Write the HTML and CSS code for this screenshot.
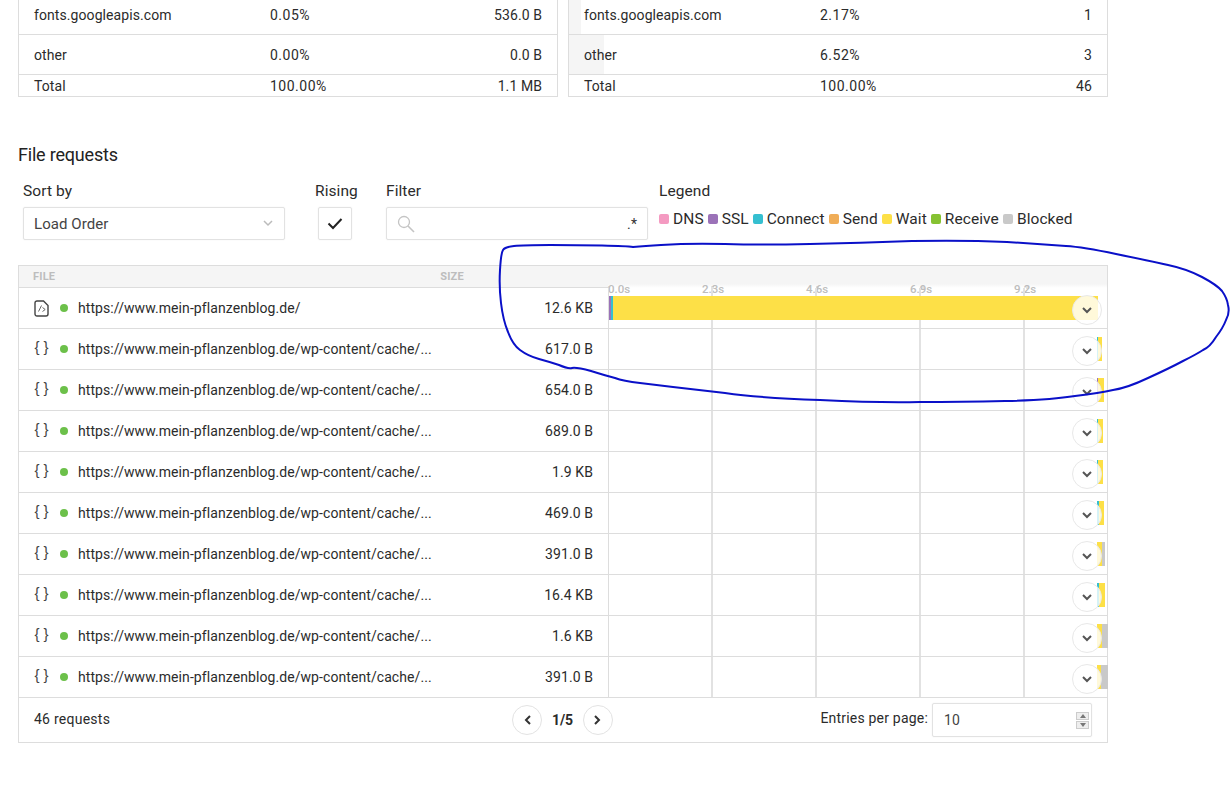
FILE: index.html
```html
<!DOCTYPE html>
<html lang="en">
<head>
	<meta charset="UTF-8">
	<title>File requests</title>
	<link rel="stylesheet" href="styles.css">
</head>
<body>
	<div class="page">
		<div class="summary">
			<div class="sum-table">
				<div class="sum-row"><span class="sum-name">fonts.googleapis.com</span><span class="sum-pct">0.05%</span><span class="sum-val">536.0 B</span></div>
				<div class="sum-row"><span class="sum-name">other</span><span class="sum-pct">0.00%</span><span class="sum-val">0.0 B</span></div>
				<div class="sum-row total"><span class="sum-name">Total</span><span class="sum-pct">100.00%</span><span class="sum-val">1.1 MB</span></div>
			</div>
			<div class="sum-table">
				<div class="sum-row"><i class="sum-fill" style="width:2.17%"></i><span class="sum-name">fonts.googleapis.com</span><span class="sum-pct">2.17%</span><span class="sum-val">1</span></div>
				<div class="sum-row"><i class="sum-fill" style="width:6.52%"></i><span class="sum-name">other</span><span class="sum-pct">6.52%</span><span class="sum-val">3</span></div>
				<div class="sum-row total"><span class="sum-name">Total</span><span class="sum-pct">100.00%</span><span class="sum-val">46</span></div>
			</div>
		</div>

		<h2 class="title">File requests</h2>

		<div class="controls">
			<div class="ctl ctl-sort">
				<label class="ctl-label">Sort by</label>
				<div class="box select">Load Order
					<svg class="select-arrow" width="10" height="7" viewBox="0 0 10 7"><path d="M1 1l4 4 4-4" fill="none" stroke="#bbb" stroke-width="1.5"/></svg>
				</div>
			</div>
			<div class="ctl ctl-rising">
				<label class="ctl-label">Rising</label>
				<div class="box check">
					<svg width="16" height="13" viewBox="0 0 16 13"><path d="M1.5 6.5l4.5 4.5 8.5-9" fill="none" stroke="#222" stroke-width="2"/></svg>
				</div>
			</div>
			<div class="ctl ctl-filter">
				<label class="ctl-label">Filter</label>
				<div class="box filter">
					<svg width="18" height="18" viewBox="0 0 18 18"><circle cx="7" cy="7" r="5.5" fill="none" stroke="#c4c4c4" stroke-width="1.3"/><path d="M11 11l6 6" stroke="#c4c4c4" stroke-width="1.6"/></svg>
					<span class="regex">.*</span>
				</div>
			</div>
			<div class="ctl ctl-legend">
				<label class="ctl-label">Legend</label>
				<div class="legend">
					<span class="key"><i class="swatch dns"></i>DNS</span>
					<span class="key"><i class="swatch ssl"></i>SSL</span>
					<span class="key"><i class="swatch connect"></i>Connect</span>
					<span class="key"><i class="swatch send"></i>Send</span>
					<span class="key"><i class="swatch wait"></i>Wait</span>
					<span class="key"><i class="swatch receive"></i>Receive</span>
					<span class="key"><i class="swatch blocked"></i>Blocked</span>
				</div>
			</div>
		</div>

		<div class="requests">
			<div class="req-head">
				<div class="head-file"><span>FILE</span><span class="head-size">SIZE</span></div>
				<div class="head-chart">
					<span class="tick">0.0s</span>
					<span class="tick">2.3s</span>
					<span class="tick">4.6s</span>
					<span class="tick">6.9s</span>
					<span class="tick">9.2s</span>
				</div>
			</div>

			<div class="req-row">
				<span class="type">
					<svg width="15" height="17" viewBox="0 0 15 17"><path d="M3 1h6.500L14 5.500V14a2 2 0 0 1-2 2H3a2 2 0 0 1-2-2V3a2 2 0 0 1 2-2z" fill="none" stroke="#444" stroke-width="1.400"/><path d="M7.500 5.500L4.500 11.500M8.500 7.500l2.700 2-2.700 2" fill="none" stroke="#666" stroke-width="1"/></svg>
				</span>
				<i class="dot"></i>
				<span class="url">https://www.mein-pflanzenblog.de/</span>
				<span class="size">12.6 KB</span>
				<div class="chart">
					<div class="bar">
						<i class="ssl" style="width:2px"></i><i class="connect" style="width:2px"></i><i class="wait" style="width:485px"></i>
					</div>
					<button class="toggle"><svg width="10" height="7" viewBox="0 0 10 7"><path d="M1 1l4 4 4-4" fill="none" stroke="#555" stroke-width="2"/></svg></button>
				</div>
			</div>

			<div class="req-row">
				<span class="type braces">{ }</span><i class="dot"></i>
				<span class="url">https://www.mein-pflanzenblog.de/wp-content/cache/...</span>
				<span class="size">617.0 B</span>
				<div class="chart">
					<div class="bar" style="margin-left:488px">
						<i class="connect" style="width:1px"></i><i class="wait" style="width:4px"></i>
					</div>
					<button class="toggle"><svg width="10" height="7" viewBox="0 0 10 7"><path d="M1 1l4 4 4-4" fill="none" stroke="#555" stroke-width="2"/></svg></button>
				</div>
			</div>

			<div class="req-row">
				<span class="type braces">{ }</span><i class="dot"></i>
				<span class="url">https://www.mein-pflanzenblog.de/wp-content/cache/...</span>
				<span class="size">654.0 B</span>
				<div class="chart">
					<div class="bar" style="margin-left:488px">
						<i class="ssl" style="width:1px"></i><i class="wait" style="width:6px"></i>
					</div>
					<button class="toggle"><svg width="10" height="7" viewBox="0 0 10 7"><path d="M1 1l4 4 4-4" fill="none" stroke="#555" stroke-width="2"/></svg></button>
				</div>
			</div>

			<div class="req-row">
				<span class="type braces">{ }</span><i class="dot"></i>
				<span class="url">https://www.mein-pflanzenblog.de/wp-content/cache/...</span>
				<span class="size">689.0 B</span>
				<div class="chart">
					<div class="bar" style="margin-left:488px">
						<i class="connect" style="width:1px"></i><i class="wait" style="width:5px"></i>
					</div>
					<button class="toggle"><svg width="10" height="7" viewBox="0 0 10 7"><path d="M1 1l4 4 4-4" fill="none" stroke="#555" stroke-width="2"/></svg></button>
				</div>
			</div>

			<div class="req-row">
				<span class="type braces">{ }</span><i class="dot"></i>
				<span class="url">https://www.mein-pflanzenblog.de/wp-content/cache/...</span>
				<span class="size">1.9 KB</span>
				<div class="chart">
					<div class="bar" style="margin-left:488px">
						<i class="connect" style="width:1px"></i><i class="wait" style="width:5px"></i>
					</div>
					<button class="toggle"><svg width="10" height="7" viewBox="0 0 10 7"><path d="M1 1l4 4 4-4" fill="none" stroke="#555" stroke-width="2"/></svg></button>
				</div>
			</div>

			<div class="req-row">
				<span class="type braces">{ }</span><i class="dot"></i>
				<span class="url">https://www.mein-pflanzenblog.de/wp-content/cache/...</span>
				<span class="size">469.0 B</span>
				<div class="chart">
					<div class="bar" style="margin-left:488px">
						<i class="connect" style="width:2px"></i><i class="wait" style="width:5px"></i>
					</div>
					<button class="toggle"><svg width="10" height="7" viewBox="0 0 10 7"><path d="M1 1l4 4 4-4" fill="none" stroke="#555" stroke-width="2"/></svg></button>
				</div>
			</div>

			<div class="req-row">
				<span class="type braces">{ }</span><i class="dot"></i>
				<span class="url">https://www.mein-pflanzenblog.de/wp-content/cache/...</span>
				<span class="size">391.0 B</span>
				<div class="chart">
					<div class="bar" style="margin-left:488px">
						<i class="wait" style="width:5px"></i><i class="blocked" style="width:3px"></i>
					</div>
					<button class="toggle"><svg width="10" height="7" viewBox="0 0 10 7"><path d="M1 1l4 4 4-4" fill="none" stroke="#555" stroke-width="2"/></svg></button>
				</div>
			</div>

			<div class="req-row">
				<span class="type braces">{ }</span><i class="dot"></i>
				<span class="url">https://www.mein-pflanzenblog.de/wp-content/cache/...</span>
				<span class="size">16.4 KB</span>
				<div class="chart">
					<div class="bar" style="margin-left:488px">
						<i class="connect" style="width:2px"></i><i class="wait" style="width:6px"></i>
					</div>
					<button class="toggle"><svg width="10" height="7" viewBox="0 0 10 7"><path d="M1 1l4 4 4-4" fill="none" stroke="#555" stroke-width="2"/></svg></button>
				</div>
			</div>

			<div class="req-row">
				<span class="type braces">{ }</span><i class="dot"></i>
				<span class="url">https://www.mein-pflanzenblog.de/wp-content/cache/...</span>
				<span class="size">1.6 KB</span>
				<div class="chart">
					<div class="bar" style="margin-left:488px">
						<i class="wait" style="width:5px"></i><i class="blocked" style="width:6px"></i>
					</div>
					<button class="toggle"><svg width="10" height="7" viewBox="0 0 10 7"><path d="M1 1l4 4 4-4" fill="none" stroke="#555" stroke-width="2"/></svg></button>
				</div>
			</div>

			<div class="req-row">
				<span class="type braces">{ }</span><i class="dot"></i>
				<span class="url">https://www.mein-pflanzenblog.de/wp-content/cache/...</span>
				<span class="size">391.0 B</span>
				<div class="chart">
					<div class="bar" style="margin-left:488px">
						<i class="wait" style="width:4px"></i><i class="blocked" style="width:7px"></i>
					</div>
					<button class="toggle"><svg width="10" height="7" viewBox="0 0 10 7"><path d="M1 1l4 4 4-4" fill="none" stroke="#555" stroke-width="2"/></svg></button>
				</div>
			</div>

			<div class="req-foot">
				<span class="count">46 requests</span>
				<div class="pager">
					<button class="page-btn"><svg width="7" height="10" viewBox="0 0 7 10"><path d="M6 1L2 5l4 4" fill="none" stroke="#333" stroke-width="2"/></svg></button>
					<b class="page-num">1/5</b>
					<button class="page-btn"><svg width="7" height="10" viewBox="0 0 7 10"><path d="M1 1l4 4-4 4" fill="none" stroke="#333" stroke-width="2"/></svg></button>
				</div>
				<div class="entries">
					<span class="entries-label">Entries per page:</span>
					<div class="box entries-box">10
						<span class="spin"><i class="spin-up"></i><i class="spin-down"></i></span>
					</div>
				</div>
			</div>
		</div>

		<!-- hand drawn marker ring on top of the screenshot -->
		<svg class="marker" width="1231" height="793" viewBox="0 0 1231 793">
			<path d="M633 247Q627 246 602 245.500Q577 245 550 245Q523 245 514 246Q505 247 503 250Q501 253 500 270Q499 287 501 303Q503 320 508 332Q513 345 520 350Q528 356 539 359Q550 362 559 365Q568 369 572 368Q576 367 591 371Q607 376 615 378Q623 381 640 383Q657 385 673 387Q690 389 725 393Q760 398 820 400Q880 403 920 402Q960 402 1005 401Q1050 400 1075 396Q1100 393 1113 390Q1127 388 1148 378Q1170 368 1183 361Q1197 354 1203 350Q1210 347 1216 337Q1223 328 1226 320Q1230 313 1228 305Q1227 298 1222 291Q1217 285 1202 277Q1187 269 1168 265Q1150 261 1116 254Q1083 247 1066 246Q1050 245 1007 242Q965 240 912 241Q860 243 810 244Q760 245 725 244Q690 243 661 245Q645 246 633 247" fill="none" stroke="#0a10c8" stroke-width="2" stroke-linecap="round"/>
		</svg>
	</div>
</body>
</html>
```

FILE: styles.css
```css
*{
	padding: 0;
	margin: 0;
	box-sizing: border-box;
}
body{
	font-family: Roboto, "Liberation Sans", sans-serif;
	font-size: 14px;
	letter-spacing: .08px;
	color: #2b2b2b;
	background: #fff;
	overflow: hidden;
}
.page{
	position: relative;
	width: 1231px;
	height: 793px;
	padding-left: 18px;
	overflow: hidden;
}
.marker{
	position: absolute;
	left: 0;
	top: 0;
	pointer-events: none;
}

/* summary tables */
.summary{
	display: flex;
	gap: 10px;
	margin-top: -6px;
}
.sum-table{
	width: 540px;
	border: 1px solid #ddd;
}
.sum-row{
	position: relative;
	display: flex;
	align-items: center;
	height: 40px;
	padding: 0 15px;
	border-bottom: 1px solid #ddd;
}
.sum-row.total{
	height: 21px;
	border-bottom: 0;
}
.sum-fill{
	position: absolute;
	left: 0;
	top: 0;
	bottom: 0;
	background: #f5f5f5;
}
.sum-name{
	position: relative;
	width: 236px;
}
.sum-pct{
	position: relative;
	letter-spacing: .5px;
}
.sum-val{
	position: relative;
	margin-left: auto;
}

.title{
	margin-top: 46px;
	font-size: 18px;
	font-weight: 400;
	line-height: 24px;
	letter-spacing: -.2px;
	color: #222;
}

/* controls */
.controls{
	display: flex;
	margin-top: 15px;
	padding-left: 5px;
}
.ctl-label{
	display: block;
	height: 18px;
	line-height: 18px;
	font-size: 15.500px;
}
.ctl-sort{
	width: 292px;
}
.ctl-rising{
	width: 71px;
}
.ctl-filter{
	width: 273px;
}
.box{
	display: flex;
	align-items: center;
	height: 33px;
	margin-top: 7px;
	background: #fff;
	border: 1px solid #e2e2e2;
	border-radius: 2px;
	box-shadow: 0 0 2px rgba(0,0,0,.06);
}
.select{
	width: 262px;
	padding: 0 11px 0 10px;
	justify-content: space-between;
	color: #444;
	font-size: 15px;
}
.check{
	width: 34px;
	margin-left: 3px;
	justify-content: center;
}
.filter{
	width: 262px;
	padding: 0 10px 0 10px;
	justify-content: space-between;
}
.regex{
	font-size: 14px;
	color: #333;
}
.legend{
	display: flex;
	gap: 4px;
	margin-top: 9px;
	font-size: 15.500px;
	line-height: 20px;
}
.key{
	display: flex;
	align-items: center;
}
.swatch{
	width: 10px;
	height: 10px;
	margin-right: 4px;
	border-radius: 2px;
}
.dns{ background: #f49ac1; }
.ssl{ background: #9b72b8; }
.connect{ background: #35bfd0; }
.send{ background: #f0ad57; }
.wait{ background: #fde047; }
.receive{ background: #86c232; }
.blocked{ background: #c9c9c9; }

/* request table */
.requests{
	width: 1090px;
	margin-top: 25px;
	border: 1px solid #ddd;
	border-top: 0;
}
.req-head{
	display: flex;
	height: 23px;
	border-top: 1px solid #ddd;
}
.head-file{
	flex: none;
	display: flex;
	width: 589px;
	height: 22px;
	padding: 0 0 0 14px;
	background: #f5f5f5;
	border-bottom: 1px solid #ddd;
	font-size: 11px;
	font-weight: 700;
	line-height: 21px;
	letter-spacing: .2px;
	color: #bdbdbd;
}
.head-size{
	margin-left: 385px;
}
.head-chart{
	flex: 1;
	display: flex;
	height: 23px;
	background:
		repeating-linear-gradient(90deg, #e2e2e2 0, #e2e2e2 1px, transparent 1px, transparent 103px, #e2e2e2 103px, #e2e2e2 105px) 0 100% / 100% 3px no-repeat,
		linear-gradient(#f5f5f5 0, #f5f5f5 18px, #fff 22px);
	font-size: 11.500px;
	font-weight: 500;
	letter-spacing: 0;
	color: #bdbdbd;
}
.tick{
	flex: none;
	width: 104px;
	height: 30px;
	padding-top: 16px;
	line-height: 14px;
}
.tick:first-child{
	width: 94px;
}
.tick:last-child{
	width: 93px;
}
.req-row{
	display: flex;
	align-items: center;
	height: 41px;
	border-bottom: 1px solid #ddd;
}
.type{
	flex: none;
	display: flex;
	justify-content: center;
	width: 15px;
	margin-left: 15px;
	margin-right: -1px;
}
.braces{
	font-family: "Liberation Sans", sans-serif;
	font-size: 15px;
	margin-top: -5px;
	letter-spacing: 0;
	white-space: nowrap;
	color: #444;
}
.dot{
	flex: none;
	width: 8px;
	height: 8px;
	margin-left: 12px;
	border-radius: 50%;
	background: #6cc04a;
}
.url{
	width: 420px;
	margin-left: 10px;
	white-space: nowrap;
}
.size{
	width: 95px;
	text-align: right;
}
.chart{
	position: relative;
	flex: none;
	width: 499px;
	height: 40px;
	margin-left: 15px;
	display: flex;
	align-items: center;
	border-left: 1px solid #ddd;
	background: repeating-linear-gradient(90deg, transparent 0, transparent 102px, #e2e2e2 102px, #e2e2e2 104px);
}
.bar{
	display: flex;
	height: 24px;
}
.bar i{
	display: block;
	height: 100%;
}
.toggle{
	position: absolute;
	left: 463px;
	top: 7px;
	width: 30px;
	height: 30px;
	display: flex;
	align-items: center;
	justify-content: center;
	border: 1px solid #e8e8e8;
	border-radius: 50%;
	background: rgba(255,255,255,.8);
}

/* footer */
.req-foot{
	display: flex;
	align-items: center;
	height: 44px;
	padding: 0 15px;
}
.count{
	width: 478px;
	margin-top: -3px;
	letter-spacing: .25px;
}
.pager{
	display: flex;
	align-items: center;
	gap: 10px;
	margin-top: -1px;
}
.page-btn{
	display: flex;
	align-items: center;
	justify-content: center;
	width: 30px;
	height: 30px;
	background: #fff;
	border: 1px solid #e3e3e3;
	border-radius: 50%;
}
.page-num{
	font-size: 14px;
	letter-spacing: -.1px;
}
.entries{
	display: flex;
	align-items: center;
	gap: 4px;
	margin-left: auto;
}
.entries-label{
	margin-top: -5px;
	letter-spacing: .2px;
}
.entries-box{
	width: 160px;
	height: 34px;
	margin-top: 0;
	padding: 0 2px 0 11px;
	justify-content: space-between;
	color: #444;
}
.spin{
	display: flex;
	flex-direction: column;
	gap: 1px;
	width: 13px;
	height: 17px;
}
.spin i{
	position: relative;
	display: block;
	flex: 1;
	background: #eee;
	border: 1px solid #ccc;
}
.spin i::after{
	content: "";
	position: absolute;
	left: 2.500px;
	top: 1px;
	border-left: 3px solid transparent;
	border-right: 3px solid transparent;
}
.spin-up::after{
	border-bottom: 4px solid #777;
}
.spin-down::after{
	border-top: 4px solid #777;
}
```
